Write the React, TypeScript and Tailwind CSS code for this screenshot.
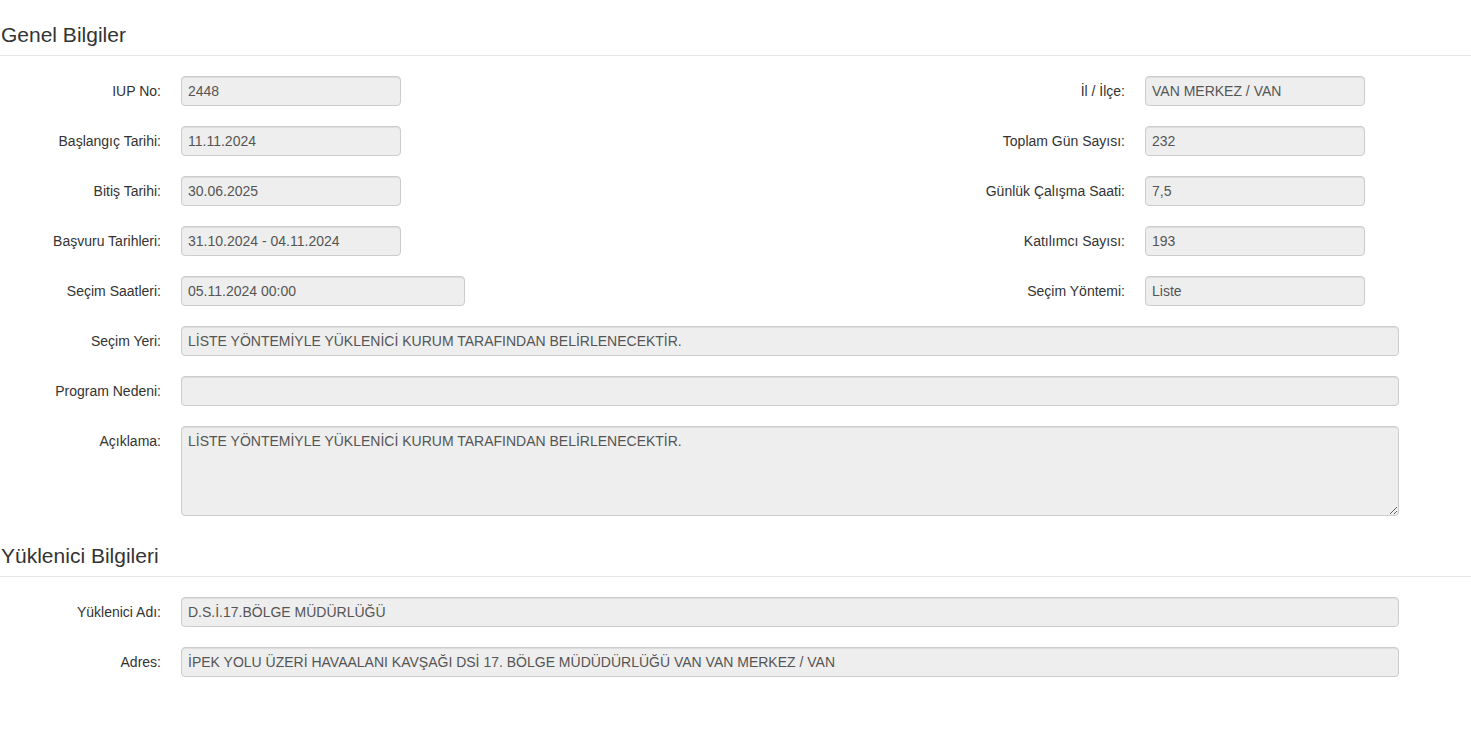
import React from "react";

type Field = { label: string; value: string; wide?: boolean };

const rows: [Field, Field | null][] = [
  [{ label: "IUP No:", value: "2448" }, { label: "İl / İlçe:", value: "VAN MERKEZ / VAN" }],
  [{ label: "Başlangıç Tarihi:", value: "11.11.2024" }, { label: "Toplam Gün Sayısı:", value: "232" }],
  [{ label: "Bitiş Tarihi:", value: "30.06.2025" }, { label: "Günlük Çalışma Saati:", value: "7,5" }],
  [{ label: "Başvuru Tarihleri:", value: "31.10.2024 - 04.11.2024" }, { label: "Katılımcı Sayısı:", value: "193" }],
  [{ label: "Seçim Saatleri:", value: "05.11.2024 00:00", wide: true }, { label: "Seçim Yöntemi:", value: "Liste" }],
];

function Input({ value, className }: { value: string; className: string }) {
  return (
    <div
      className={`h-[30px] flex items-center pt-[1px] px-[6px] bg-[#eeeeee] border border-[#cccccc] rounded-[4px] text-[#555] text-[14px] shadow-[inset_0_1px_1px_rgba(0,0,0,0.075)] whitespace-nowrap overflow-hidden ${className}`}
    >
      {value}
    </div>
  );
}

function Label({ text, className }: { text: string; className: string }) {
  return <div className={`text-right text-[#333] text-[14px] shrink-0 ${className}`}>{text}</div>;
}

function Heading({ title, className }: { title: string; className: string }) {
  return (
    <div className={`pb-[9px] border-b border-[#e5e5e5] ${className}`}>
      <h3 className="text-[21px] leading-[23px] text-[#333] pl-[1px]">{title}</h3>
    </div>
  );
}

function FullRow({ label, value }: { label: string; value: string }) {
  return (
    <div className="flex items-center h-[30px] pt-[1px]">
      <Label text={label} className="w-[161px]" />
      <Input value={value} className="ml-[20px] w-[1218px] -mt-[1px]" />
    </div>
  );
}

export default function App() {
  return (
    <main
      className="min-h-screen bg-white"
      style={{ fontFamily: '"Liberation Sans", Arial, sans-serif' }}
    >
      <Heading title="Genel Bilgiler" className="pt-[23px]" />

      <div className="flex flex-col gap-[20px] mt-[20px]">
        {rows.map(([l, r], i) => (
          <div key={i} className="flex items-center h-[30px] pt-[1px]">
            <div className="flex items-center w-[736px]">
              <Label text={l.label} className="w-[161px]" />
              <Input value={l.value} className={`ml-[20px] -mt-[1px] ${l.wide ? "w-[284px]" : "w-[220px]"}`} />
            </div>
            {r && (
              <div className="flex items-center">
                <Label text={r.label} className="w-[389px]" />
                <Input value={r.value} className="ml-[20px] -mt-[1px] w-[220px]" />
              </div>
            )}
          </div>
        ))}
        <FullRow label="Seçim Yeri:" value="LİSTE YÖNTEMİYLE YÜKLENİCİ KURUM TARAFINDAN BELİRLENECEKTİR." />
        <FullRow label="Program Nedeni:" value="" />
        <div className="flex items-start">
          <Label text="Açıklama:" className="w-[161px] pt-[5px]" />
          <textarea
            readOnly
            value="LİSTE YÖNTEMİYLE YÜKLENİCİ KURUM TARAFINDAN BELİRLENECEKTİR."
            className="ml-[20px] w-[1218px] h-[90px] px-[6px] py-[6px] bg-[#eeeeee] border border-[#cccccc] rounded-[4px] text-[#555] text-[14px] leading-[17px] shadow-[inset_0_1px_1px_rgba(0,0,0,0.075)] outline-none"
          />
        </div>
      </div>

      <Heading title="Yüklenici Bilgileri" className="mt-[28px]" />

      <div className="flex flex-col gap-[20px] mt-[20px]">
        <FullRow label="Yüklenici Adı:" value="D.S.İ.17.BÖLGE MÜDÜRLÜĞÜ" />
        <FullRow
          label="Adres:"
          value="İPEK YOLU ÜZERİ HAVAALANI KAVŞAĞI DSİ 17. BÖLGE MÜDÜDÜRLÜĞÜ VAN VAN MERKEZ / VAN"
        />
      </div>
    </main>
  );
}
